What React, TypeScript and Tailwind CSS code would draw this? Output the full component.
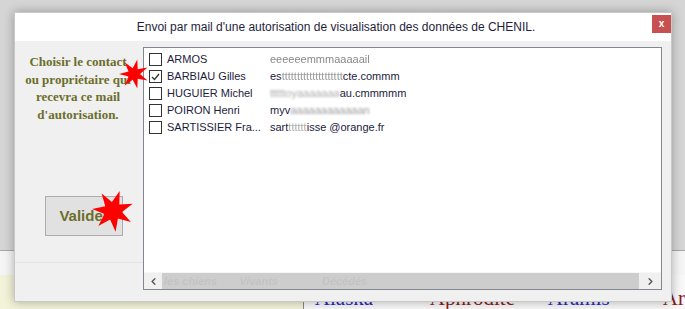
import { ChevronLeft, ChevronRight } from 'lucide-react'

interface Contact {
  name: string
  checked?: boolean
  mail: React.ReactNode
}

const contacts: Contact[] = [
  {
    name: 'ARMOS',
    mail: <span className="blur-[0.6px] text-[#888]">eeeeeemmmaaaaail</span>,
  },
  {
    name: 'BARBIAU Gilles',
    checked: true,
    mail: (
      <>
        es<span className="blur-[0.7px] text-[#999]">tttttttttttttttttttt</span>cte.commm
      </>
    ),
  },
  {
    name: 'HUGUIER Michel',
    mail: (
      <>
        <span className="blur-[0.8px] text-[#aaa]">tttttoyaaaaaaa</span>au.cmmmmm
      </>
    ),
  },
  {
    name: 'POIRON Henri',
    mail: (
      <>
        myv<span className="blur-[0.8px] text-[#999]">aaaaaaaaaaaan</span>
      </>
    ),
  },
  {
    name: 'SARTISSIER Fra...',
    mail: (
      <>
        sart<span className="blur-[0.7px] text-[#aaa]">tttttt</span>isse @orange.fr
      </>
    ),
  },
]

function Star({ size, r, rot = 0 }: { size: number; r: number; rot?: number }) {
  const c = size / 2
  const pts: string[] = []
  for (let i = 0; i < 14; i++) {
    const a = ((rot + i * (360 / 14)) * Math.PI) / 180
    const rad = i % 2 === 0 ? c : r
    pts.push(`${(c + rad * Math.cos(a)).toFixed(1)},${(c + rad * Math.sin(a)).toFixed(1)}`)
  }
  return (
    <svg width={size} height={size} viewBox={`0 0 ${size} ${size}`}>
      <polygon points={pts.join(' ')} fill="#ff0000" />
    </svg>
  )
}

export default function App() {
  return (
    <div className="relative w-[685px] h-[309px] overflow-hidden bg-[#d6d6d6] font-['Liberation_Sans',Arial,sans-serif]">
      {/* page behind the dialog */}
      <div className="flex flex-col h-full">
        <div className="h-[262px] bg-[#d5d5d5]" />
        <div className="h-[26px] border-t border-[#a8a8a8] bg-[#f5f5f5]" />
        <div className="flex flex-1">
          <div className="w-[308px] bg-[#f3f3da] border-r border-[#8a8a8a]" />
          <div className="flex-1 bg-[#f8f8f8] pt-[13px] flex font-['Liberation_Serif',serif] text-[21px] leading-none">
            <span className="ml-[11px] w-[115px] text-[#2a2ab8]">Alaska</span>
            <span className="w-[118px] text-[#8c1c1c]">Aphrodite</span>
            <span className="w-[115px] text-[#2a2ab8]">Aramis</span>
            <span className="text-[#8c1c1c]">Ar</span>
          </div>
        </div>
      </div>

      {/* dialog */}
      <div className="absolute left-[14px] top-[12px] w-[658px] h-[290px] bg-[#f0f0f0] border border-[#c8c8c8] shadow-[0_0_10px_rgba(0,0,0,0.3)] flex flex-col">
        <div className="relative h-[28px] bg-white flex items-center justify-center pr-[14px] text-[12px] text-[#1e1e3a]">
          Envoi par mail d'une autorisation de visualisation des données de CHENIL.
          <div className="absolute right-0 top-[2px] w-[19px] h-[18px] bg-[#c75050] flex items-center justify-center text-white text-[10px] font-bold leading-none">
            x
          </div>
        </div>

        <div className="flex flex-1">
          <div className="w-[128px] flex flex-col border-b border-[#e2e2e2] mb-[38px]">
            <p className="mt-[12px] pr-[2px] text-center font-['Liberation_Serif',serif] font-bold text-[13px] leading-[17.5px] text-[#6c6e2c]">
              Choisir le contact
              <br />
              ou propriétaire qui
              <br />
              recevra ce mail
              <br />
              d'autorisation.
            </p>
            <button className="mt-[73px] ml-[30px] w-[78px] h-[40px] bg-[#e1e1e1] border border-[#adadad] text-[15px] font-bold text-[#6c6e2c]">
              Valider
            </button>
          </div>

          <div className="mt-[6px] mb-[11px] w-[519px] bg-white border border-[#828790] flex flex-col">
            <div className="flex-1 pt-[3px] pl-[5px] text-[11px] text-[#1c1c3c]">
              {contacts.map((c) => (
                <div key={c.name} className="h-[17px] flex items-center">
                  <div className="w-[13px] h-[13px] border border-[#333] bg-white flex items-center justify-center shrink-0">
                    {c.checked && (
                      <svg width="9" height="8" viewBox="0 0 9 8">
                        <path d="M1 4 L3.5 6.5 L8 1" fill="none" stroke="#333" strokeWidth="1.3" />
                      </svg>
                    )}
                  </div>
                  <span className="ml-[5px] w-[103px] whitespace-nowrap">{c.name}</span>
                  <span className="whitespace-nowrap">{c.mail}</span>
                </div>
              ))}
            </div>
            <div className="h-[17px] flex items-stretch bg-[#f0f0f0] border-t border-[#f6f6f6]">
              <div className="w-[18px] flex items-center justify-center">
                <ChevronLeft className="w-[11px] h-[11px] text-[#555]" strokeWidth={3} />
              </div>
              <div className="flex-1 bg-[#cdcdcd] flex items-center gap-[22px] pl-[2px] text-[11px] italic font-bold text-[#c3c3c3] blur-[0.4px]">
                <span>les chiens</span>
                <span>Vivants</span>
                <span className="ml-[22px]">Décédés</span>
              </div>
              <div className="w-[22px] flex items-center justify-center">
                <ChevronRight className="w-[11px] h-[11px] text-[#555]" strokeWidth={3} />
              </div>
            </div>
          </div>
        </div>
      </div>

      {/* annotation stars */}
      <div className="absolute left-[119px] top-[59px]">
        <Star size={30} r={6} rot={180} />
      </div>
      <div className="absolute left-[92px] top-[190px]">
        <Star size={42} r={9} rot={-20} />
      </div>
    </div>
  )
}
